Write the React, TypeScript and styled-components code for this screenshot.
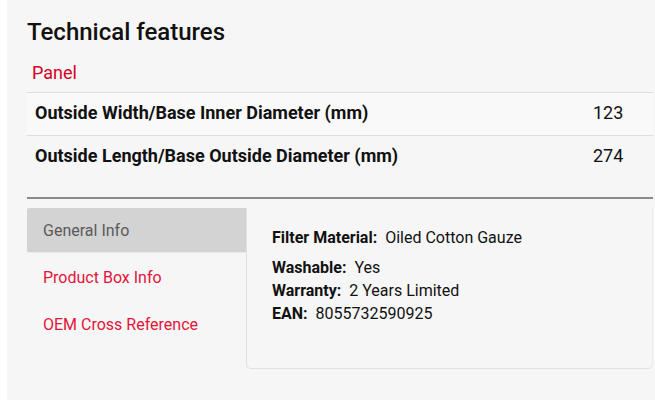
import React from "react";
import { createGlobalStyle, styled } from "styled-components";

const red = "#d7001f";
const linkRed = "#e3143a";

const GlobalCss = createGlobalStyle`
  html, body {
    margin: 0;
    padding: 0;
    background: #ffffff;
    font-family: Roboto, "Liberation Sans", Arial, sans-serif;
    color: #111;
  }
`;

const Page = styled.div`
  padding-left: 7px;
  min-height: 400px;
  box-sizing: border-box;
`;

const Panel = styled.section`
  background: #f6f6f6;
  min-height: 400px;
  padding: 17px 2px 0 20px;
  box-sizing: border-box;
`;

const Title = styled.h2`
  margin: 0;
  font-size: 24px;
  font-weight: 500;
  line-height: 30px;
  color: #111;
`;

const GroupName = styled.div`
  color: ${red};
  font-size: 18px;
  line-height: 22px;
  padding: 15px 0 0 5px;
  margin-bottom: 8px;
`;

const Table = styled.div`
  display: flex;
  flex-direction: column;
`;

const Row = styled.div`
  display: grid;
  grid-template-columns: 1fr 60px;
  align-items: center;
  height: 43px;
  border-top: 1px solid #dedede;
  background: #f9f9f9;
  font-size: 18px;
  line-height: 22px;
  padding-bottom: 2px;
  box-sizing: border-box;
  &:last-child {
    background: transparent;
  }
`;

const Label = styled.div`
  font-weight: 700;
  padding-left: 8px;
`;

const Value = styled.div`
  font-weight: 400;
`;

const Divider = styled.hr`
  margin: 19px 0 9px 0;
  border: none;
  border-top: 2px solid #8a8a8a;
`;

const Tabs = styled.div`
  display: flex;
  align-items: stretch;
`;

const TabList = styled.div`
  width: 219px;
  display: flex;
  flex-direction: column;
  gap: 3px;
`;

const Tab = styled.div<{ $active?: boolean }>`
  height: 44px;
  display: flex;
  align-items: center;
  padding-left: 16px;
  font-size: 16px;
  color: ${(p) => (p.$active ? "#5a5a5a" : linkRed)};
  background: ${(p) => (p.$active ? "#d3d3d3" : "transparent")};
  border-radius: 2px 0 0 2px;
  box-shadow: ${(p) => (p.$active ? "0 1px 1px rgba(0,0,0,0.06)" : "none")};
`;

const TabPanel = styled.div`
  flex: 1;
  height: 161px;
  box-sizing: border-box;
  border: 1px solid #e0e0e0;
  border-top: none;
  border-right-color: #ececec;
  border-radius: 0 0 5px 5px;
  padding: 18px 24px 0 25px;
  font-size: 16px;
  line-height: 23px;
`;

const Spec = styled.div<{ $gap?: boolean }>`
  margin-bottom: ${(p) => (p.$gap ? "7px" : "0")};
  b {
    font-weight: 700;
    margin-right: 8px;
  }
`;

export default function App() {
  return (
    <Page>
      <GlobalCss />
      <Panel>
        <Title>Technical features</Title>
        <GroupName>Panel</GroupName>
        <Table>
          <Row>
            <Label>Outside Width/Base Inner Diameter (mm)</Label>
            <Value>123</Value>
          </Row>
          <Row>
            <Label>Outside Length/Base Outside Diameter (mm)</Label>
            <Value>274</Value>
          </Row>
        </Table>
        <Divider />
        <Tabs>
          <TabList>
            <Tab $active>General Info</Tab>
            <Tab>Product Box Info</Tab>
            <Tab>OEM Cross Reference</Tab>
          </TabList>
          <TabPanel>
            <Spec $gap>
              <b>Filter Material:</b>Oiled Cotton Gauze
            </Spec>
            <Spec>
              <b>Washable:</b>Yes
            </Spec>
            <Spec>
              <b>Warranty:</b>2 Years Limited
            </Spec>
            <Spec>
              <b>EAN:</b>8055732590925
            </Spec>
          </TabPanel>
        </Tabs>
      </Panel>
    </Page>
  );
}
